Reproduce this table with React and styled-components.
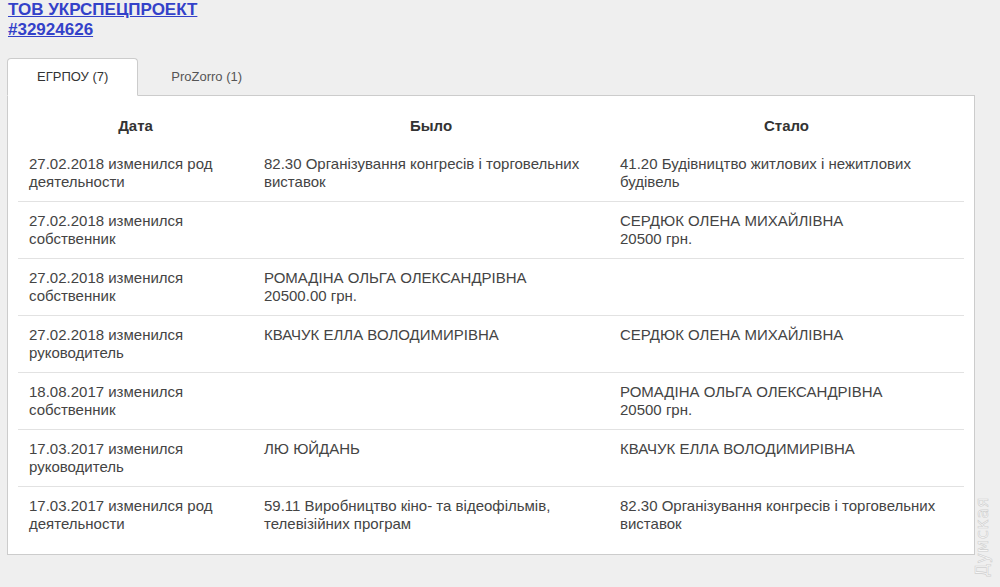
import React from "react";
import styled, { createGlobalStyle } from "styled-components";

const Global = createGlobalStyle`
  html, body { margin: 0; padding: 0; background: #efefef; }
  body { font-family: "Liberation Sans", Arial, sans-serif; color: #333; overflow: hidden; }
  #root { height: 587px; }
`;

const Page = styled.div`
  position: relative;
  height: 587px;
  padding: 0 26px 0 7px;
  box-sizing: border-box;
`;

const Heading = styled.div`
  padding-left: 1px;
  display: flex;
  flex-direction: column;
  align-items: flex-start;
`;

const Link = styled.a`
  font-size: 17px;
  font-weight: bold;
  line-height: 20px;
  color: #3341c9;
  text-decoration: underline;
  cursor: pointer;
`;

const Tabs = styled.div`
  display: flex;
  margin-top: 18px;
  position: relative;
  z-index: 1;
`;

const Tab = styled.div`
  height: 38px;
  box-sizing: border-box;
  padding: 0 ${(p) => (p.$active ? 29 : 32)}px 2px;
  display: flex;
  align-items: center;
  font-size: 13px;
  color: ${(p) => (p.$active ? "#333" : "#555")};
  background: ${(p) => (p.$active ? "#fff" : "transparent")};
  border: 1px solid ${(p) => (p.$active ? "#ccc" : "transparent")};
  border-bottom-color: ${(p) => (p.$active ? "#fff" : "transparent")};
  border-radius: 4px 4px 0 0;
  margin-bottom: -1px;
`;

const Panel = styled.div`
  background: #fff;
  border: 1px solid #ccc;
  padding: 11px 10px 11px 10px;
  width: 968px;
  box-sizing: border-box;
`;

const Table = styled.table`
  width: 100%;
  table-layout: fixed;
  border-collapse: collapse;
  font-size: 15px;
  line-height: 18px;
`;

const Col = styled.col`
  width: ${(p) => (p.$w ? `${p.$w}px` : "auto")};
`;

const Th = styled.th`
  font-weight: bold;
  text-align: center;
  padding: 10px 10px;
  color: #333;
`;

const Row = styled.tr`
  border-bottom: 1px solid #e2e2e2;
  &:last-child { border-bottom: none; }
`;

const Td = styled.td`
  padding: 10px 10px 10px 11px;
  vertical-align: top;
  color: #444;
`;

const Watermark = styled.div`
  position: absolute;
  right: -22px;
  bottom: 40px;
  transform: rotate(-90deg);
  transform-origin: center;
  font-family: "DejaVu Sans", sans-serif;
  font-size: 17px;
  color: #f8f8f8;
  -webkit-text-stroke: 0.6px #cfcfcf;
  letter-spacing: 0.5px;
`;

const rows = [
  ["27.02.2018 изменился род деятельности", "82.30 Організування конгресів і торговельних виставок", "41.20 Будівництво житлових і нежитлових будівель"],
  ["27.02.2018 изменился собственник", "", ["СЕРДЮК ОЛЕНА МИХАЙЛІВНА", "20500 грн."]],
  ["27.02.2018 изменился собственник", ["РОМАДІНА ОЛЬГА ОЛЕКСАНДРІВНА", "20500.00 грн."], ""],
  ["27.02.2018 изменился руководитель", "КВАЧУК ЕЛЛА ВОЛОДИМИРІВНА", "СЕРДЮК ОЛЕНА МИХАЙЛІВНА"],
  ["18.08.2017 изменился собственник", "", ["РОМАДІНА ОЛЬГА ОЛЕКСАНДРІВНА", "20500 грн."]],
  ["17.03.2017 изменился руководитель", "ЛЮ ЮЙДАНЬ", "КВАЧУК ЕЛЛА ВОЛОДИМИРІВНА"],
  ["17.03.2017 изменился род деятельности", "59.11 Виробництво кіно- та відеофільмів, телевізійних програм", "82.30 Організування конгресів і торговельних виставок"],
];

const Cell = ({ v }) =>
  Array.isArray(v) ? (
    <Td>
      {v[0]}
      <br />
      {v[1]}
    </Td>
  ) : (
    <Td>{v}</Td>
  );

export default function App() {
  return (
    <>
      <Global />
      <Page>
        <Heading>
          <Link>ТОВ УКРСПЕЦПРОЕКТ</Link>
          <Link>#32924626</Link>
        </Heading>
        <Tabs>
          <Tab $active>ЕГРПОУ (7)</Tab>
          <Tab>ProZorro (1)</Tab>
        </Tabs>
        <Panel>
          <Table>
            <colgroup>
              <Col $w={235} />
              <Col $w={356} />
              <Col />
            </colgroup>
            <thead>
              <tr>
                <Th>Дата</Th>
                <Th>Было</Th>
                <Th>Стало</Th>
              </tr>
            </thead>
            <tbody>
              {rows.map((r, i) => (
                <Row key={i}>
                  <Td>{r[0]}</Td>
                  <Cell v={r[1]} />
                  <Cell v={r[2]} />
                </Row>
              ))}
            </tbody>
          </Table>
        </Panel>
        <Watermark>Думская</Watermark>
      </Page>
    </>
  );
}
